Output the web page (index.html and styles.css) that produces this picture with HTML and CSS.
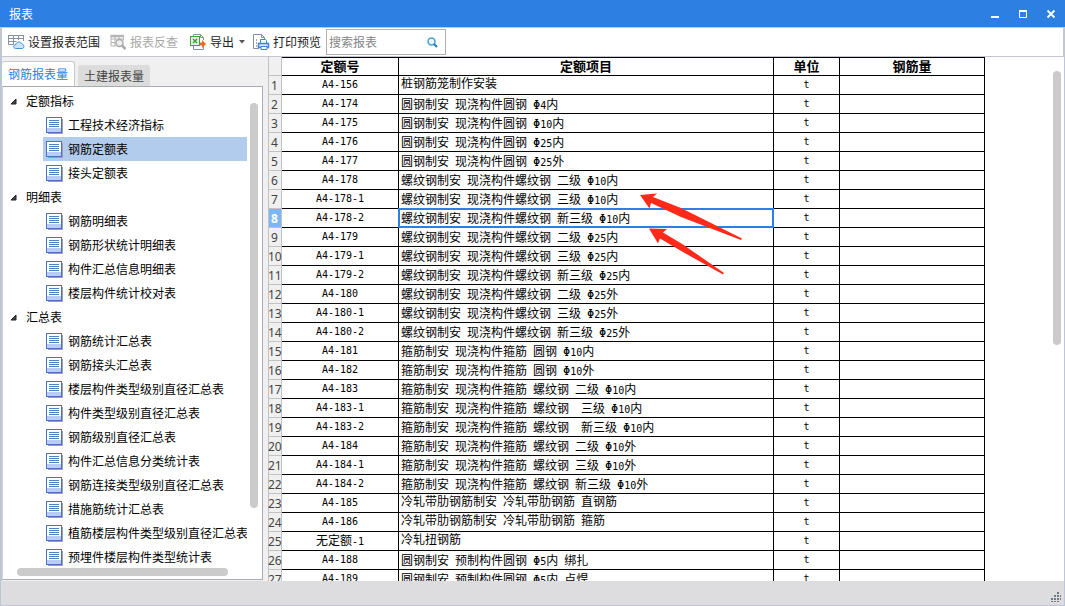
FILE: index.html
```html
<!DOCTYPE html>
<html lang="zh-CN">
<head>
<meta charset="utf-8">
<title>报表</title>
<link rel="stylesheet" href="styles.css">
</head>
<body>
<svg class="defs" width="0" height="0" aria-hidden="true">
  <symbol id="doc" viewBox="0 0 17 17">
    <path d="M2 16.5h14.5V2" fill="none" stroke="#a0a0a0"/>
    <rect class="paper" x=".5" y=".5" width="15" height="15"/>
    <path class="foot" d="M1 11h14v4H1z"/>
    <path class="lines" d="M3 3.5h10M3 5.5h10M3 7.5h10M3 9.5h10"/>
  </symbol>
</svg>
<header class="titlebar">
  <h1>报表</h1>
  <div class="window-buttons">
    <button aria-label="最小化"><svg width="12" height="12"><path d="M2 9h8" stroke="#fff" stroke-width="2"/></svg></button>
    <button aria-label="最大化"><svg width="12" height="12"><path d="M2 3h8M2.500 3v6.500h7V3" fill="none" stroke="#fff"/><path d="M2 3h8" stroke="#fff" stroke-width="2"/></svg></button>
    <button aria-label="关闭"><svg width="12" height="12"><path d="M2.500 2.500l7 7M9.500 2.500l-7 7" stroke="#fff" stroke-width="1.800"/></svg></button>
  </div>
</header>
<div class="toolbar">
  <button><svg width="17" height="16"><path d="M.5 1v9.500h5M.5 4.500h15M.5 7.500h8M5.500 1v9.500M10.500 1v5M15.500 1v6" fill="none" stroke="#8591a0"/><path d="M0 1.500h16" stroke="#8591a0"/><path d="M7.500 14.500c-2.500 0-2.500-4 .5-4 0-3 5-3.500 6-.5 2.500.5 2.500 4.500 0 4.500z" fill="#c9e4fb" stroke="#4a90d9"/></svg><span>设置报表范围</span></button>
  <button class="second" disabled><svg width="17" height="16"><path d="M1 1.500h12.500v5M1 2v10h5M1 5h12M1 8.500h5M5 2v10M9 2v3" fill="none" stroke="#b4b4b4"/><path d="M.5 2h13" stroke="#b4b4b4" stroke-width="2.500"/><circle cx="9.500" cy="9" r="3.500" fill="#eee" stroke="#aaa" stroke-width="1.400"/><path d="M12 11.500l3.500 3.500" stroke="#aaa" stroke-width="2.500"/></svg><span>报表反查</span></button>
  <button class="export"><svg width="17" height="16"><path d="M3.500 2.500v-2h7l3 3V6M3.500 12v3.500h10V12M10.500.5v3h3" fill="none" stroke="#8591a0"/><rect x=".5" y="2.500" width="9" height="9" fill="#e3f3d8" stroke="#4e9a3e"/><path d="M3 5l4 4M7 5l-4 4" stroke="#4e9a3e" stroke-width="1.500"/><path d="M10 8.500h2V6l4 4-4 4v-2.500h-2z" fill="#ee6a23"/></svg><span>导出</span><svg class="caret" width="6" height="4"><path d="M0 0h6L3 3.500z" fill="#555"/></svg></button>
  <button class="preview"><svg width="17" height="16"><path d="M6 14.500H.5V.5h8l3 3V5M8.500.5v3h3" fill="none" stroke="#8591a0"/><path d="M3 6h1M3 9h1M3 12h1" stroke="#8591a0" stroke-width="1.500"/><path d="M7.500 9V5.500h5l1 1V9" fill="#fff" stroke="#3d83d0"/><path d="M5.500 9.500h10v4h-10z" fill="#d5e8fb" stroke="#3d83d0" stroke-width="1.500"/><path d="M8 12.500h6v3H8z" fill="#fff" stroke="#3d83d0"/></svg><span>打印预览</span></button>
  <label class="search"><input type="text" placeholder="搜索报表" aria-label="搜索报表"><svg width="11" height="11"><circle cx="4.500" cy="4.500" r="3.500" fill="#eef8ff" stroke="#4ba3d8" stroke-width="1.600"/><path d="M7 7l3 3" stroke="#287fc0" stroke-width="2.200"/></svg></label>
</div>
<main>
  <aside>
    <div class="tabs" role="tablist">
      <button class="active" role="tab" aria-selected="true">钢筋报表量</button>
      <button role="tab" aria-selected="false">土建报表量</button>
    </div>
    <div class="panel">
      <div class="tree">
        <h2><svg width="7" height="7"><path d="M6 1v5H1z" fill="#444" stroke="#222"/></svg>定额指标</h2>
        <ul>
          <li><button><svg class="doc"><use href="#doc"/></svg>工程技术经济指标</button></li>
          <li><button class="selected"><svg class="doc"><use href="#doc"/></svg>钢筋定额表</button></li>
          <li><button><svg class="doc"><use href="#doc"/></svg>接头定额表</button></li>
        </ul>
        <h2><svg width="7" height="7"><path d="M6 1v5H1z" fill="#444" stroke="#222"/></svg>明细表</h2>
        <ul>
          <li><button><svg class="doc"><use href="#doc"/></svg>钢筋明细表</button></li>
          <li><button><svg class="doc"><use href="#doc"/></svg>钢筋形状统计明细表</button></li>
          <li><button><svg class="doc"><use href="#doc"/></svg>构件汇总信息明细表</button></li>
          <li><button><svg class="doc"><use href="#doc"/></svg>楼层构件统计校对表</button></li>
        </ul>
        <h2><svg width="7" height="7"><path d="M6 1v5H1z" fill="#444" stroke="#222"/></svg>汇总表</h2>
        <ul>
          <li><button><svg class="doc"><use href="#doc"/></svg>钢筋统计汇总表</button></li>
          <li><button><svg class="doc"><use href="#doc"/></svg>钢筋接头汇总表</button></li>
          <li><button><svg class="doc"><use href="#doc"/></svg>楼层构件类型级别直径汇总表</button></li>
          <li><button><svg class="doc"><use href="#doc"/></svg>构件类型级别直径汇总表</button></li>
          <li><button><svg class="doc"><use href="#doc"/></svg>钢筋级别直径汇总表</button></li>
          <li><button><svg class="doc"><use href="#doc"/></svg>构件汇总信息分类统计表</button></li>
          <li><button><svg class="doc"><use href="#doc"/></svg>钢筋连接类型级别直径汇总表</button></li>
          <li><button><svg class="doc"><use href="#doc"/></svg>措施筋统计汇总表</button></li>
          <li><button><svg class="doc"><use href="#doc"/></svg>植筋楼层构件类型级别直径汇总表</button></li>
          <li><button><svg class="doc"><use href="#doc"/></svg>预埋件楼层构件类型统计表</button></li>
        </ul>
      </div>
      <div class="track-v"><div class="thumb"></div></div>
      <div class="track-h"><div class="thumb"></div></div>
    </div>
  </aside>
  <section class="sheet">
    <table>
      <colgroup><col class="c-index"><col class="c-code"><col class="c-item"><col class="c-unit"><col class="c-qty"></colgroup>
      <thead><tr><td class="corner"></td><th>定额号</th><th>定额项目</th><th>单位</th><th>钢筋量</th></tr></thead>
      <tbody>
        <tr><th>1</th><td>A4-156</td><td><div class="item"><span>桩钢筋笼制作安装</span></div></td><td>t</td><td></td></tr>
        <tr><th>2</th><td>A4-174</td><td><div class="item low"><span>圆钢制安</span> <span>现浇构件圆钢</span> <span>Φ<small>4</small>内</span></div></td><td>t</td><td></td></tr>
        <tr><th>3</th><td>A4-175</td><td><div class="item low"><span>圆钢制安</span> <span>现浇构件圆钢</span> <span>Φ<small>10</small>内</span></div></td><td>t</td><td></td></tr>
        <tr><th>4</th><td>A4-176</td><td><div class="item low"><span>圆钢制安</span> <span>现浇构件圆钢</span> <span>Φ<small>25</small>内</span></div></td><td>t</td><td></td></tr>
        <tr><th>5</th><td>A4-177</td><td><div class="item low"><span>圆钢制安</span> <span>现浇构件圆钢</span> <span>Φ<small>25</small>外</span></div></td><td>t</td><td></td></tr>
        <tr><th>6</th><td>A4-178</td><td><div class="item low"><span>螺纹钢制安</span> <span>现浇构件螺纹钢</span> <span>二级</span> <span>Φ<small>10</small>内</span></div></td><td>t</td><td></td></tr>
        <tr><th>7</th><td>A4-178-1</td><td><div class="item low"><span>螺纹钢制安</span> <span>现浇构件螺纹钢</span> <span>三级</span> <span>Φ<small>10</small>内</span></div></td><td>t</td><td></td></tr>
        <tr class="current"><th>8</th><td>A4-178-2</td><td class="focused"><div class="item low"><span>螺纹钢制安</span> <span>现浇构件螺纹钢</span> <span>新三级</span> <span>Φ<small>10</small>内</span></div></td><td>t</td><td></td></tr>
        <tr><th>9</th><td>A4-179</td><td><div class="item low"><span>螺纹钢制安</span> <span>现浇构件螺纹钢</span> <span>二级</span> <span>Φ<small>25</small>内</span></div></td><td>t</td><td></td></tr>
        <tr><th>10</th><td>A4-179-1</td><td><div class="item low"><span>螺纹钢制安</span> <span>现浇构件螺纹钢</span> <span>三级</span> <span>Φ<small>25</small>内</span></div></td><td>t</td><td></td></tr>
        <tr><th>11</th><td>A4-179-2</td><td><div class="item low"><span>螺纹钢制安</span> <span>现浇构件螺纹钢</span> <span>新三级</span> <span>Φ<small>25</small>内</span></div></td><td>t</td><td></td></tr>
        <tr><th>12</th><td>A4-180</td><td><div class="item low"><span>螺纹钢制安</span> <span>现浇构件螺纹钢</span> <span>二级</span> <span>Φ<small>25</small>外</span></div></td><td>t</td><td></td></tr>
        <tr><th>13</th><td>A4-180-1</td><td><div class="item low"><span>螺纹钢制安</span> <span>现浇构件螺纹钢</span> <span>三级</span> <span>Φ<small>25</small>外</span></div></td><td>t</td><td></td></tr>
        <tr><th>14</th><td>A4-180-2</td><td><div class="item low"><span>螺纹钢制安</span> <span>现浇构件螺纹钢</span> <span>新三级</span> <span>Φ<small>25</small>外</span></div></td><td>t</td><td></td></tr>
        <tr><th>15</th><td>A4-181</td><td><div class="item low"><span>箍筋制安</span> <span>现浇构件箍筋</span> <span>圆钢</span> <span>Φ<small>10</small>内</span></div></td><td>t</td><td></td></tr>
        <tr><th>16</th><td>A4-182</td><td><div class="item low"><span>箍筋制安</span> <span>现浇构件箍筋</span> <span>圆钢</span> <span>Φ<small>10</small>外</span></div></td><td>t</td><td></td></tr>
        <tr><th>17</th><td>A4-183</td><td><div class="item low"><span>箍筋制安</span> <span>现浇构件箍筋</span> <span>螺纹钢</span> <span>二级</span> <span>Φ<small>10</small>内</span></div></td><td>t</td><td></td></tr>
        <tr><th>18</th><td>A4-183-1</td><td><div class="item low"><span>箍筋制安</span> <span>现浇构件箍筋</span> <span>螺纹钢</span> <span class="apart">三级</span> <span>Φ<small>10</small>内</span></div></td><td>t</td><td></td></tr>
        <tr><th>19</th><td>A4-183-2</td><td><div class="item low"><span>箍筋制安</span> <span>现浇构件箍筋</span> <span>螺纹钢</span> <span class="apart">新三级</span> <span>Φ<small>10</small>内</span></div></td><td>t</td><td></td></tr>
        <tr><th>20</th><td>A4-184</td><td><div class="item low"><span>箍筋制安</span> <span>现浇构件箍筋</span> <span>螺纹钢</span> <span>二级</span> <span>Φ<small>10</small>外</span></div></td><td>t</td><td></td></tr>
        <tr><th>21</th><td>A4-184-1</td><td><div class="item low"><span>箍筋制安</span> <span>现浇构件箍筋</span> <span>螺纹钢</span> <span>三级</span> <span>Φ<small>10</small>外</span></div></td><td>t</td><td></td></tr>
        <tr><th>22</th><td>A4-184-2</td><td><div class="item low"><span>箍筋制安</span> <span>现浇构件箍筋</span> <span>螺纹钢</span> <span>新三级</span> <span>Φ<small>10</small>外</span></div></td><td>t</td><td></td></tr>
        <tr><th>23</th><td>A4-185</td><td><div class="item"><span>冷轧带肋钢筋制安</span> <span>冷轧带肋钢筋</span> <span>直钢筋</span></div></td><td>t</td><td></td></tr>
        <tr><th>24</th><td>A4-186</td><td><div class="item"><span>冷轧带肋钢筋制安</span> <span>冷轧带肋钢筋</span> <span>箍筋</span></div></td><td>t</td><td></td></tr>
        <tr><th>25</th><td><span class="cjk">无定额</span>-1</td><td><div class="item"><span>冷轧扭钢筋</span></div></td><td>t</td><td></td></tr>
        <tr><th>26</th><td>A4-188</td><td><div class="item low"><span>圆钢制安</span> <span>预制构件圆钢</span> <span>Φ<small>5</small>内</span> <span>绑扎</span></div></td><td>t</td><td></td></tr>
        <tr><th>27</th><td>A4-189</td><td><div class="item low"><span>圆钢制安</span> <span>预制构件圆钢</span> <span>Φ<small>5</small>内</span> <span>点焊</span></div></td><td>t</td><td></td></tr>
      </tbody>
    </table>
    <svg class="arrows" width="104" height="82" viewBox="639 193 104 82" aria-hidden="true">
      <path d="M640 195l17-1.500-4 3.500 28 11 61 30.500-1 1.500-60-23-30-14-1.500 5.500zM649 228.500l18 .5-4 3.500 20 12 41 28.500-1 1.500-41-23-22-13-2 5z" fill="#ff2a1a"/>
    </svg>
    <div class="track-v"><div class="thumb"></div></div>
  </section>
</main>
<footer><svg width="10" height="10"><path d="M6 0h2v2H6zM6 3h2v2H6zM3 3h2v2H3zM9 3h1v2H9zM0 6h2v2H0zM3 6h2v2H3zM6 6h2v2H6zM9 6h1v2H9zM0 9h2v1H0zM3 9h2v1H3zM6 9h2v1H6z" fill="#707984"/></svg></footer>
</body>
</html>
```

FILE: styles.css
```css
* { box-sizing: border-box; }
body {
  margin: 0;
  height: 100vh;
  display: flex;
  flex-direction: column;
  overflow: hidden;
  background: #f0f0f0;
  color: #000;
  font: 12px/18px "Noto Sans CJK SC", sans-serif;
}
button {
  border: 0;
  padding: 0;
  background: none;
  color: inherit;
  font: inherit;
  white-space: nowrap;
}
svg { flex: none; display: block; }
.defs { position: absolute; }
h1, h2, ul { margin: 0; padding: 0; font: inherit; list-style: none; }

.titlebar {
  flex: none;
  height: 28px;
  display: flex;
  align-items: center;
  justify-content: space-between;
  padding: 0 8px 0 9px;
  background: #2d7fe1;
  border-bottom: 1px solid #c3cad6;
  color: #fff;
}
.window-buttons { display: flex; gap: 16px; }

.toolbar {
  flex: none;
  height: 29px;
  display: flex;
  align-items: center;
  padding: 0 6px;
  background: #fff;
  border: 1px solid #c3c7ce;
  border-width: 0 2px 1px;
}
.toolbar button { display: flex; align-items: center; gap: 3px; margin-left: 10px; color: #222; }
.toolbar button:first-child { margin-left: 0; }
.toolbar button:disabled { color: #a8a8a8; }
.toolbar .export { margin-left: 12px; }
.toolbar .preview { margin-left: 8px; }
.caret { margin-left: 2px; }
.search {
  display: flex;
  align-items: center;
  width: 120px;
  height: 26px;
  margin-left: 5px;
  padding: 0 7px 0 2px;
  border: 1px solid #b0b0b0;
}
.search input {
  flex: 1;
  min-width: 0;
  border: 0;
  padding: 0;
  outline: 0;
  font: inherit;
}
.search input::placeholder { color: #858585; opacity: 1; }

main {
  flex: 1;
  min-height: 0;
  display: flex;
  border: 1px solid #bdc6d6;
  border-width: 0 1px 0 2px;
}
aside {
  flex: none;
  width: 261px;
  display: flex;
  flex-direction: column;
  padding: 4px 0 1px;
}
.tabs { display: flex; align-items: flex-end; gap: 3px; }
.tabs button {
  height: 21px;
  padding: 0 6px;
  border-radius: 3px 3px 0 0;
  background: #dcdcdc;
  color: #444;
}
.tabs .active {
  height: 25px;
  background: #fff;
  border: 1px solid #c8c8c8;
  border-width: 1px 1px 0 0;
  color: #2d7fe1;
}
.panel {
  flex: 1;
  min-height: 0;
  display: grid;
  grid-template-columns: 1fr 8px;
  grid-template-rows: 1fr 8px;
  padding: 2px 4px 3px 0;
  background: #fff;
  border: 1px solid #a9acb2;
  border-left-color: #d0d3d8;
}
.tree { overflow: hidden; }
.tree h2 { height: 24px; display: flex; align-items: center; gap: 9px; padding-left: 7px; }
.tree li { padding: 0 3px 0 40px; }
.tree li button {
  width: 100%;
  height: 24px;
  display: flex;
  align-items: center;
  gap: 5px;
  padding-left: 3px;
  overflow: hidden;
}
.tree .selected { background: #b2ccee; }
.doc { width: 17px; height: 17px; }
.paper { fill: #fff; stroke: #4d70c2; }
.foot { fill: #b9cdfb; }
.lines { stroke: #5a7ccb; }
.selected .paper { fill: #8fc0f5; stroke: #2765bd; }
.selected .foot { fill: #6eabf5; }
.selected .lines { stroke: #2e6fc9; }
.thumb { border-radius: 4px; background: #cbcbcb; }
.panel .track-v { padding: 14px 0 60px; }
.panel .track-v .thumb { height: 100%; }
.track-h { padding: 0 22px 0 14px; }
.track-h .thumb { height: 8px; }

.sheet {
  position: relative;
  flex: 1;
  min-width: 0;
  display: flex;
  justify-content: space-between;
  align-items: flex-start;
  margin-left: 5px;
  overflow: hidden;
  background: #fff;
}
table {
  flex: none;
  width: 717px;
  table-layout: fixed;
  border-collapse: separate;
  border-spacing: 0;
}
.c-index { width: 14px; }
.c-code { width: 117px; }
.c-item { width: 375px; }
.c-unit { width: 66px; }
.c-qty { width: 145px; }
th, td {
  height: 19px;
  padding: 0;
  border: 1px solid #000;
  border-width: 0 1px 1px 0;
  text-align: center;
  vertical-align: middle;
  white-space: nowrap;
  line-height: 16px;
}
tbody td { font: 10px/16px "DejaVu Sans Mono", "Noto Sans CJK SC", monospace; }
thead th {
  border-top-width: 1px;
  vertical-align: top;
  font-size: 13px;
  font-weight: 700;
  line-height: 15px;
}
tbody th, .corner {
  border-color: #c2c2c2;
  box-shadow: inset 1px 0 #c2c2c2;
  background: #f0f0f0;
  color: #444;
  font: 12px/16px "Noto Sans", sans-serif;
}
tbody th { padding-top: 2px; }
.current th { background: #7ab6f8; color: #fff; font-weight: 700; }
.item {
  display: flex;
  gap: 6px;
  height: 18px;
  padding-left: 2px;
  font-size: 12px;
}
.item.low { padding-top: 2px; }
.item small { font-size: 10px; }
.item .apart { margin-left: 6px; }
.cjk { font-size: 12px; }
.focused { position: relative; }
.focused::after {
  content: "";
  position: absolute;
  inset: -1px;
  border: 2px solid #2d7fe1;
}
.arrows { position: absolute; left: 371px; top: 136px; }
.sheet .track-v { flex: none; width: 8px; margin: 14px 3px 0 0; }
.sheet .track-v .thumb { height: 274px; }

footer {
  flex: none;
  height: 25px;
  display: flex;
  justify-content: flex-end;
  align-items: flex-end;
  padding: 0 3px 3px;
  background: #dddde0;
  border: 1px solid #bdc6d6;
  border-top: 0;
}
```
